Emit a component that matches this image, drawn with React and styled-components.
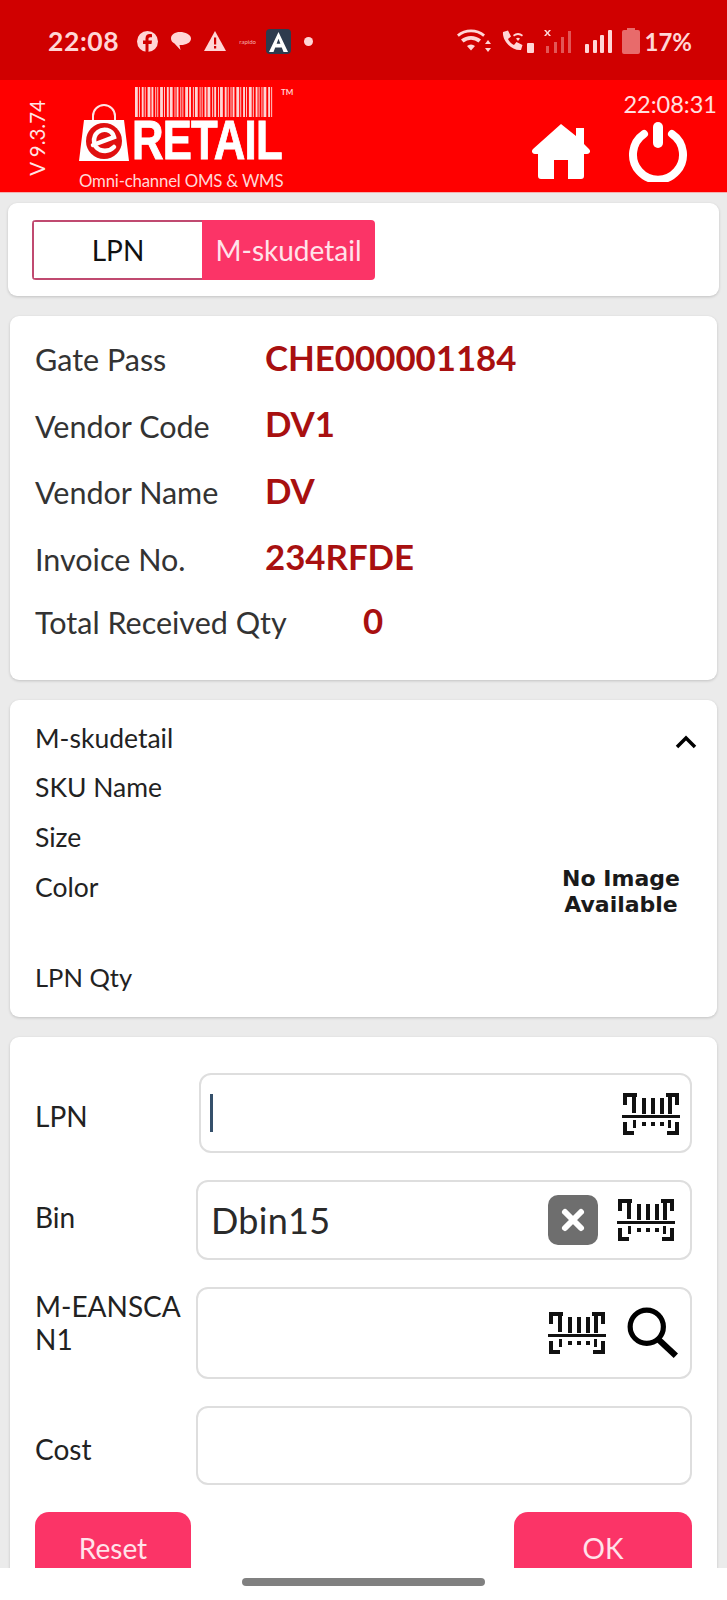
import React from "react";
import styled, { createGlobalStyle } from "styled-components";

const Global = createGlobalStyle`
  html, body { margin: 0; padding: 0; background: #ececec; }
  * { box-sizing: border-box; }
`;

const Page = styled.div`
  width: 727px; height: 1600px; display: flex; flex-direction: column; overflow: hidden;
  background: #ebebeb; font-family: Lato, "Liberation Sans", sans-serif; color: #222;
`;
const StatusBar = styled.div`
  height: 80px; flex: none; background: #d00000; color: #ffd6d6;
  display: flex; align-items: center; justify-content: space-between; padding: 2px 35px 0 48px;
`;
const StatusGroup = styled.div`display: flex; align-items: center; gap: ${p => p.$gap || 12}px;`;
const Clock = styled.span`font: 700 26.5px Lato, sans-serif; letter-spacing: .6px; margin-right: 5px;`;
const Battery = styled.span`font: 700 24px Lato, sans-serif; margin-left: -6px;`;
const Rapido = styled.span`font: 400 6px Lato, sans-serif; width: 14px; opacity: .8;`;

const Header = styled.header`
  height: 113px; flex: none; background: #ff0000; display: flex; align-items: stretch;
  border-bottom: 1px solid #f4b0b0;
`;
const VersionCol = styled.div`width: 79px; flex: none; display: flex; align-items: center; justify-content: center; padding: 4px 6px 0 0;`;
const Version = styled.span`
  writing-mode: vertical-rl; transform: rotate(180deg); color: #ffe4e4; font: 400 20.5px Lato, sans-serif; white-space: nowrap;
`;
const Logo = styled.div`width: 250px; flex: none; display: flex; flex-direction: column; padding-top: 7px; color: #fff;`;
const BarcodeRow = styled.div`display: flex; padding-left: 56px; height: 30px; gap: 7px;`;
const Tm = styled.span`font: 700 8px Lato, sans-serif; color: #ffd0d0;`;
const BrandRow = styled.div`display: flex; align-items: flex-end; height: 45px; gap: 3px;`;
const Brand = styled.span`
  font: 700 56px/44px "Liberation Sans", sans-serif; color: #fff;
  display: inline-block; transform: scaleX(.78); transform-origin: left bottom; letter-spacing: -1px; white-space: nowrap;
  -webkit-text-stroke: .9px #fff;
`;
const Tagline = styled.div`font: 400 16.8px/20px Lato, sans-serif; color: #ffd8d8; margin-top: 9px; white-space: nowrap; letter-spacing: -.2px;`;
const HeaderRight = styled.div`flex: 1; display: flex; flex-direction: column; align-items: flex-end; padding: 10px 10px 0 0;`;
const Time = styled.div`font: 400 23.5px/28px Lato, sans-serif; color: #ffe0e0;`;
const HeaderIcons = styled.div`display: flex; gap: 38px; margin: 4px 29px 0 0; align-items: center;`;

const Content = styled.main`flex: 1; min-height: 0; overflow: hidden; padding: 10px 10px 0; display: flex; flex-direction: column; gap: 20px;`;
const Card = styled.section`
  background: #fff; border-radius: 9px; box-shadow: 0 1px 3px rgba(0,0,0,.18); flex: none;
  margin: ${p => p.$flush ? "0 -2px" : "0"};
`;
const TabCard = styled(Card)`height: 93px; padding: 17px 24px 0;`;
const Tabs = styled.div`display: flex; width: 343px; height: 60px; border-radius: 4px; overflow: hidden;`;
const Tab = styled.div`
  flex: ${p => p.$active ? "0 0 173px" : "1"}; display: flex; align-items: center; justify-content: center;
  font: 400 28px Lato, sans-serif; background: ${p => p.$active ? "#fb3467" : "#fff"}; color: ${p => p.$active ? "#ffe3ea" : "#111"};
  border: ${p => p.$active ? "0" : "2px solid #c04a70"}; border-right: 0;
`;
const InfoCard = styled(Card)`height: 364px; padding: 10px 25px 0;`;
const InfoRow = styled.div`display: flex; align-items: center; height: ${p => p.$h || 66.5}px;`;
const InfoLabel = styled.span`width: ${p => p.$w || 230}px; flex: none; font: 400 30.5px Lato, sans-serif; color: #333; white-space: nowrap;`;
const InfoValue = styled.span`font: 700 34.8px Lato, sans-serif; color: #a81010; position: relative; top: -2px;`;
const SkuCard = styled(Card)`height: 317px; padding: 23px 25px 0; display: grid; grid-template-columns: 1fr 130px;`;
const SkuList = styled.div`display: flex; flex-direction: column;`;
const SkuLine = styled.div`font: 400 ${p => p.$size || 26.5}px/30px Lato, sans-serif; color: #222; height: ${p => p.$h || 50}px;`;
const SkuSide = styled.div`display: flex; flex-direction: column; align-items: flex-end;`;
const Chevron = styled.div`margin: 10px -5px 0 0; height: 133px;`;
const NoImage = styled.div`
  width: 140px; margin-right: 1px; flex: none; text-align: center; font: 700 22px/26px "DejaVu Sans", sans-serif; color: #1a1a1a; white-space: nowrap;
`;
const FormCard = styled(Card)`padding: 36px 25px 0; flex: 1 0 auto;`;
const FormRow = styled.div`
  display: grid; grid-template-columns: ${p => p.$col || 161}px 1fr; align-items: center; margin-bottom: 27px;
`;
const FormLabel = styled.label`
  font: 400 28px/33px Lato, sans-serif; color: #222; padding: ${p => p.$pt || 0}px 0 ${p => p.$pb || 0}px;
`;
const InputBox = styled.div`
  height: ${p => p.$h || 79}px; border: 2px solid #dedede; border-radius: 12px; background: #fff;
  display: flex; align-items: center; padding: 0 10px 0 13px; gap: 10px;
`;
const Cursor = styled.span`width: 3px; height: 38px; background: #35506b; margin-left: -4px;`;
const InputText = styled.span`flex: 1; font: 400 36px Lato, sans-serif; color: #2a2a2a; letter-spacing: .3px;`;
const Fill = styled.span`flex: 1;`;
const ClearBtn = styled.span`
  width: 50px; height: 50px; border-radius: 10px; background: #6e6e6e; display: flex; align-items: center; justify-content: center; margin-right: 9px;
`;
const Actions = styled.div`display: flex; justify-content: space-between;`;
const Button = styled.button`
  width: ${p => p.$w}px; height: 70px; border: 0; border-radius: 14px; background: #fb3467; color: #ffe3ea;
  font: 400 28px Lato, sans-serif; display: flex; justify-content: center; padding: 19px 0 0;
`;
const NavBar = styled.footer`height: 32px; flex: none; background: #fff; display: flex; justify-content: center; padding-top: 10px; position: relative; z-index: 1;`;
const Pill = styled.div`width: 243px; height: 8px; border-radius: 4px; background: #808080;`;

const StatusIcon = ({ w, h = 24, children }) => (
  <svg width={w} height={h} viewBox={`0 0 ${w} ${h}`} fill="#ffd6d6" style={{ display: "block" }}>{children}</svg>
);

const BarcodeScan = ({ style }) => (
  <svg width="58" height="44" viewBox="0 0 58 44" fill="#111" style={{ flex: "none", ...style }}>
    <path d="M1 1h14v4H5v8H1zM44 1h13v12h-4V5h-9zM1 30h4v9h7v4H1zM53 30h4v13H45v-4h8z" />
    <rect x="10" y="4" width="4" height="17" /><rect x="20" y="6" width="4" height="16" /><rect x="29" y="6" width="4" height="16" />
    <rect x="38" y="6" width="4" height="16" /><rect x="46" y="5" width="4" height="17" />
    <rect x="0" y="23" width="58" height="3" />
    <rect x="11" y="28" width="3" height="8" /><rect x="20" y="30" width="4" height="4" /><rect x="29" y="30" width="4" height="4" />
    <rect x="38" y="30" width="4" height="4" /><rect x="46" y="28" width="3" height="8" />
  </svg>
);

const barcodeBars = [3,1,2,1,3,2,1,1,3,1,2,3,1,2,1,1,3,2,1,3,1,1,2,3,1,2,1,3,2,1,1,2,3,1,2,1,3,1,2,1,1,3,2,1];

const LogoBarcode = () => {
  let x = 0;
  const rects = barcodeBars.map((w, i) => {
    const r = <rect key={i} x={x} y="0" width={w} height="30" fill="#ffd5d5" />;
    x += w + (i % 2 ? 2 : 1.2);
    return r;
  });
  return <svg width="139" height="30" viewBox={`0 0 ${x} 30`} preserveAspectRatio="none">{rects}</svg>;
};

export default function App() {
  return (
    <Page>
      <Global />
      <StatusBar>
        <StatusGroup $gap={13}>
          <Clock>22:08</Clock>
          <StatusIcon w={21} h={21}>
            <circle cx="10.5" cy="10.5" r="10.5" />
            <path d="M11.5 21v-8h3l.5-3.5h-3.5V8c0-1 .4-1.7 1.8-1.7H15V3.3c-.5 0-1.4-.2-2.3-.2-2.5 0-4.2 1.500-4.2 4.300v2.100H6V13h2.500v8z" fill="#d00000" />
          </StatusIcon>
          <StatusIcon w={20} h={20}>
            <path d="M9 1C4 1 0 3.500 0 7.500c0 2.300 1.300 4 3.500 5l6 6.500-1-5c5.500.5 11.500-2 11.500-6.500C20 3.500 14 1 9 1z" />
          </StatusIcon>
          <StatusIcon w={22} h={20}>
            <path d="M11 0l11 20H0z" />
            <rect x="10" y="6.500" width="2.200" height="7" fill="#d00000" /><rect x="10" y="15" width="2.200" height="2.500" fill="#d00000" />
          </StatusIcon>
          <Rapido>rapido</Rapido>
          <svg width="25" height="25" viewBox="0 0 25 25" style={{ display: "block" }}>
            <rect width="25" height="25" rx="4" fill="#2e3b4e" />
            <path d="M12.500 3L22 23h-4.500l-1.700-4.500H9.200L7.500 23H3z M10.600 14.800h3.800l-1.900-5z" fill="#fff" fillRule="evenodd" />
          </svg>
          <StatusIcon w={9} h={9}><circle cx="4.500" cy="4.500" r="4.500" /></StatusIcon>
        </StatusGroup>
        <StatusGroup $gap={10}>
          <StatusIcon w={34} h={25}>
            <path d="M14 21.500l-4-4.500a6 6 0 0 1 8 0zM6.500 13.500l-2.500-3a16 16 0 0 1 20 0l-2.500 3a12 12 0 0 0-15 0zM1.800 7.800L0 5.500a22 22 0 0 1 28 0l-1.800 2.300a19 19 0 0 0-24.400 0z" />
            <path d="M31 11l3 4h-6zM31 23l-3-4h6z" />
          </StatusIcon>
          <StatusIcon w={33} h={25}>
            <path d="M2 3l5-1.500 3 6-3 2.500c1 2.500 3.500 5 6 6l2.500-3 6 3L20 21c-9 1-19-9-18-18z" />
            <path d="M12 6a8 8 0 0 1 10 0l-1 1.500a6 6 0 0 0-8 0zM15 9.500a3.500 3.500 0 0 1 4 0L17 12z" />
            <rect x="26" y="14" width="7" height="10" rx="1" />
          </StatusIcon>
          <StatusIcon w={28} h={25}>
            <path d="M0 1l2 0 1.500 2L5 1h2L4.500 4 7 7H5L3.500 5 2 7H0l2.500-3z" />
            <g opacity=".4"><rect x="2" y="17" width="3" height="7" /><rect x="10" y="13" width="3" height="11" /><rect x="17" y="8" width="3" height="16" /><rect x="24" y="2" width="3" height="22" /></g>
          </StatusIcon>
          <StatusIcon w={30} h={25}>
            <g transform="translate(3 0)"><rect x="0" y="15" width="4" height="9" rx="1" /><rect x="8" y="11" width="4" height="13" rx="1" /><rect x="15" y="6" width="4" height="18" rx="1" /><rect x="23" y="1" width="4" height="23" rx="1" /></g>
          </StatusIcon>
          <StatusIcon w={18} h={26}>
            <path d="M5 0h8v2h3a2 2 0 0 1 2 2v20a2 2 0 0 1-2 2H2a2 2 0 0 1-2-2V4a2 2 0 0 1 2-2h3z" opacity=".5" />
          </StatusIcon>
          <Battery>17%</Battery>
        </StatusGroup>
      </StatusBar>

      <Header>
        <VersionCol><Version>V 9.3.74</Version></VersionCol>
        <Logo>
          <BarcodeRow><LogoBarcode /><Tm>TM</Tm></BarcodeRow>
          <BrandRow>
            <svg width="50" height="58" viewBox="0 0 50 58" style={{ marginTop: -13, flex: "none" }}>
              <path d="M14 20v-8a11 11 0 0 1 22 0v8" fill="none" stroke="#ffe4e4" strokeWidth="2" />
              <path d="M5 16h40l5 41H0z" fill="#fff" />
              <circle cx="25" cy="37" r="18" fill="#e01010" />
              <path d="M14 41L35 33C33 25 24 24 19 28C13 33 14 43 21 46C27 48 32 46 35 43" fill="none" stroke="#fff" strokeWidth="4.500" strokeLinecap="round" />
            </svg>
            <Brand>RETAIL</Brand>
          </BrandRow>
          <Tagline>Omni-channel OMS &amp; WMS</Tagline>
        </Logo>
        <HeaderRight>
          <Time>22:08:31</Time>
          <HeaderIcons>
            <svg width="58" height="58" viewBox="0 0 58 58" fill="#fff">
              <path d="M29 1L44 13V5h8v16l5 5c2 2 1 5-2 5h-3v22c0 2-1 3-3 3H36V37H22v19H9c-2 0-3-1-3-3V31H3c-3 0-4-3-2-5z" />
            </svg>
            <svg width="60" height="60" viewBox="0 0 60 60" fill="none" stroke="#fff">
              <path d="M16 12a25 25 0 1 0 28 0" strokeWidth="8" strokeLinecap="round" />
              <path d="M30 5v16" strokeWidth="10" strokeLinecap="round" />
            </svg>
          </HeaderIcons>
        </HeaderRight>
      </Header>

      <Content>
        <TabCard $flush>
          <Tabs>
            <Tab>LPN</Tab>
            <Tab $active>M-skudetail</Tab>
          </Tabs>
        </TabCard>

        <InfoCard>
          <InfoRow><InfoLabel>Gate Pass</InfoLabel><InfoValue>CHE000001184</InfoValue></InfoRow>
          <InfoRow><InfoLabel>Vendor Code</InfoLabel><InfoValue>DV1</InfoValue></InfoRow>
          <InfoRow><InfoLabel>Vendor Name</InfoLabel><InfoValue>DV</InfoValue></InfoRow>
          <InfoRow><InfoLabel>Invoice No.</InfoLabel><InfoValue>234RFDE</InfoValue></InfoRow>
          <InfoRow $h={60}><InfoLabel $w={328}>Total Received Qty</InfoLabel><InfoValue>0</InfoValue></InfoRow>
        </InfoCard>

        <SkuCard>
          <SkuList>
            <SkuLine $h={49}>M-skudetail</SkuLine>
            <SkuLine>SKU Name</SkuLine>
            <SkuLine>Size</SkuLine>
            <SkuLine $h={90}>Color</SkuLine>
            <SkuLine $size={25.5}>LPN Qty</SkuLine>
          </SkuList>
          <SkuSide>
            <Chevron>
              <svg width="22" height="14" viewBox="0 0 22 14" fill="none" stroke="#000" strokeWidth="3.500"><path d="M2 12l9-9 9 9" /></svg>
            </Chevron>
            <NoImage>No Image<br />Available</NoImage>
          </SkuSide>
        </SkuCard>

        <FormCard>
          <FormRow $col={164}>
            <FormLabel $pt={6}>LPN</FormLabel>
            <InputBox $h={80}><Cursor /><Fill /><BarcodeScan style={{ marginTop: 2 }} /></InputBox>
          </FormRow>
          <FormRow>
            <FormLabel $pb={6}>Bin</FormLabel>
            <InputBox $h={80}>
              <InputText>Dbin15</InputText>
              <ClearBtn>
                <svg width="26" height="26" viewBox="0 0 26 26" stroke="#fff" strokeWidth="6" strokeLinecap="round"><path d="M5 5l16 16M21 5L5 21" /></svg>
              </ClearBtn>
              <BarcodeScan style={{ marginRight: 5 }} />
            </InputBox>
          </FormRow>
          <FormRow>
            <FormLabel $pb={20}>M-EANSCA<br />N1</FormLabel>
            <InputBox $h={92}>
              <Fill />
              <BarcodeScan style={{ marginRight: 10 }} />
              <svg width="54" height="52" viewBox="0 0 52 50" fill="none" stroke="#000" strokeWidth="5" style={{ flex: "none" }}><circle cx="20" cy="19" r="16" /><path d="M31 31l17 16" strokeWidth="6" /></svg>
            </InputBox>
          </FormRow>
          <FormRow>
            <FormLabel $pt={8}>Cost</FormLabel>
            <InputBox />
          </FormRow>
          <Actions>
            <Button $w={156}>Reset</Button>
            <Button $w={178}>OK</Button>
          </Actions>
        </FormCard>
      </Content>
      <NavBar><Pill /></NavBar>
    </Page>
  );
}
